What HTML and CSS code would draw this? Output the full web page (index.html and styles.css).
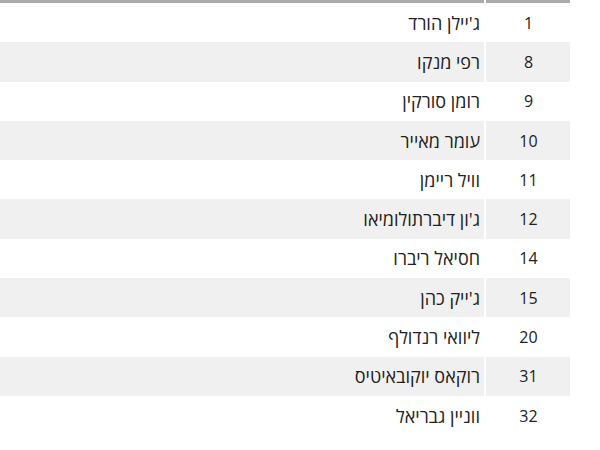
FILE: index.html
```html
<!DOCTYPE html>
<html lang="he" dir="rtl">
<head>
<meta charset="utf-8">
<link rel="stylesheet" href="styles.css">
</head>
<body>
<table class="roster">
  <thead>
    <tr><th class="num"></th><th class="name"></th></tr>
  </thead>
  <tbody>
    <tr><td class="num">1</td><td class="name">ג'יילן הורד</td></tr>
    <tr><td class="num">8</td><td class="name">רפי מנקו</td></tr>
    <tr><td class="num">9</td><td class="name">רומן סורקין</td></tr>
    <tr><td class="num">10</td><td class="name">עומר מאייר</td></tr>
    <tr><td class="num">11</td><td class="name">וויל ריימן</td></tr>
    <tr><td class="num">12</td><td class="name">ג'ון דיברתולומיאו</td></tr>
    <tr><td class="num">14</td><td class="name">חסיאל ריברו</td></tr>
    <tr><td class="num">15</td><td class="name">ג'ייק כהן</td></tr>
    <tr><td class="num">20</td><td class="name">ליוואי רנדולף</td></tr>
    <tr><td class="num">31</td><td class="name">רוקאס יוקובאיטיס</td></tr>
    <tr><td class="num">32</td><td class="name">ווניין גבריאל</td></tr>
  </tbody>
</table>
</body>
</html>
```
FILE: styles.css
```css
html, body {
  margin: 0;
  padding: 0;
  background: #fff;
}
body {
  font-family: "Open Sans", "DejaVu Sans", sans-serif;
  color: #222;
  font-size: 18px;
}
.roster {
  width: 570px;
  margin-right: auto;
  margin-left: 0;
  border-collapse: collapse;
  direction: rtl;
}
.roster th {
  height: 3px;
  padding: 0;
  background: #ababab;
}
.roster th.num {
  border-left: 2px solid #fff;
}
.roster td {
  height: 39.3px;
  padding: 0;
  box-sizing: border-box;
  vertical-align: middle;
}
.roster tbody tr:nth-child(even) td {
  background: #f0f0f0;
}
.roster td.num {
  width: 85px;
  text-align: center;
  font-size: 16px;
  border-left: 2px solid #fff;
  padding-left: 1px;
}
.roster td.name {
  text-align: right;
  padding-right: 4px;
}
```
